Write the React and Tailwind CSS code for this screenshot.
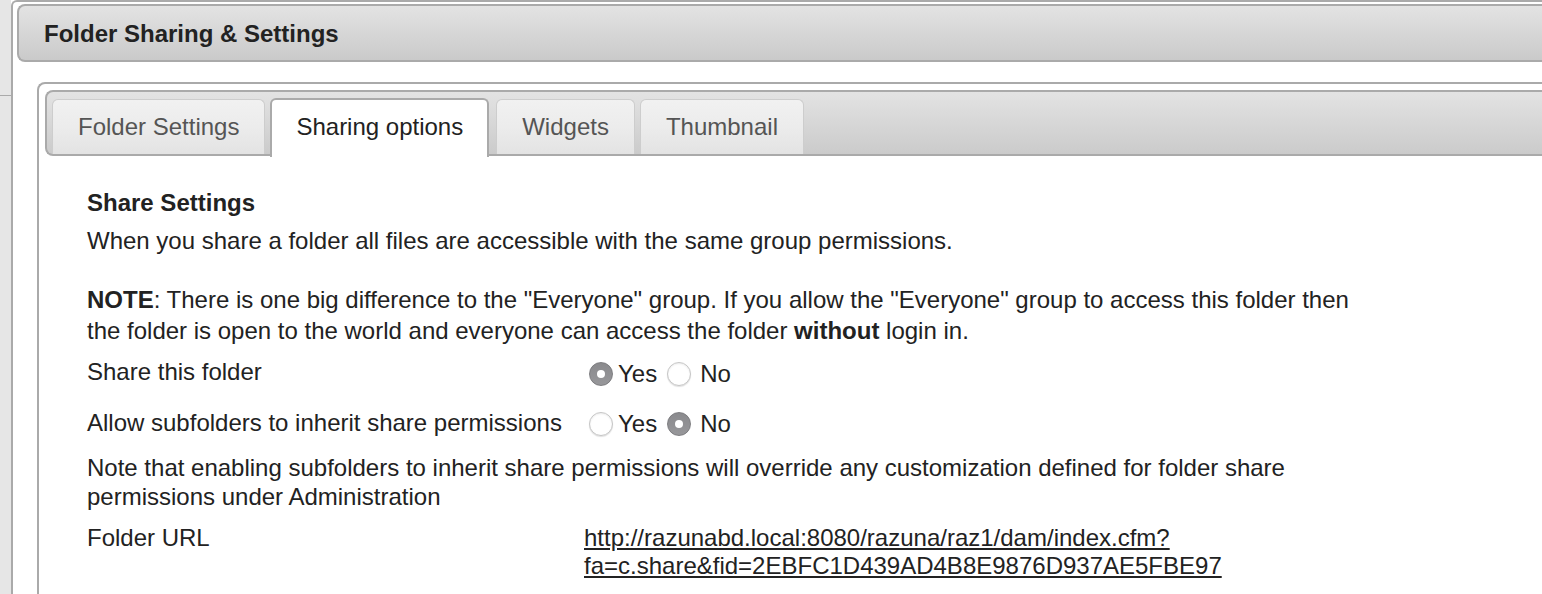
import React from "react";

const Radio = ({ checked }) =>
  checked ? (
    <span className="ml-[5px] mr-[5px] inline-flex h-[24px] w-[24px] shrink-0 items-center justify-center rounded-full border border-[#7d7d80] bg-linear-to-b from-[#8a8a8d] to-[#97979a]">
      <span className="h-[8px] w-[8px] rounded-full bg-white" />
    </span>
  ) : (
    <span className="ml-[5px] mr-[5px] inline-block h-[24px] w-[24px] shrink-0 rounded-full border border-[#c6c6c6] bg-white shadow-[inset_0_1px_2px_rgba(0,0,0,0.08),0_1px_1px_rgba(0,0,0,0.12)]" />
  );

const tabs = [
  { label: "Folder Settings" },
  { label: "Sharing options", active: true },
  { label: "Widgets" },
  { label: "Thumbnail" },
];

const App = () => {
  return (
    <div className="flex h-[594px] w-full overflow-hidden bg-white text-[24px] text-[#222] font-['Liberation_Sans',Arial,sans-serif]">
      {/* left strip */}
      <div className="w-[11px] shrink-0 bg-[#e6e6e6]">
        <div className="h-[96px] border-b border-[#aaa]" />
      </div>

      <div className="min-w-0 flex-1 rounded-tl-[6px] border-l-2 border-t-2 border-[#aaa] pl-[4px] pt-[2px]">
        {/* header */}
        <div className="-mr-6 flex h-[58px] items-center rounded-l-lg border-2 border-r-0 border-[#aaa] bg-linear-to-b from-[#e3e3e3] to-[#cacaca] pl-[25px] pt-[1px] font-bold">
          Folder Sharing &amp; Settings
        </div>

        {/* tab container */}
        <div className="-mr-6 ml-[20px] mt-[20px] h-[600px] rounded-tl-lg border-l-2 border-t-2 border-[#aaa] pl-[6px] pt-[6px]">
          <div className="flex h-[66px] items-end rounded-l-lg border-2 border-r-0 border-[#aaa] bg-linear-to-b from-[#e3e3e3] to-[#cbcbcb] pl-[5px]">
            {tabs.map((t, i) =>
              t.active ? (
                <div
                  key={i}
                  className="relative z-10 -mb-[3px] mr-[7px] flex h-[59px] items-center rounded-t-md border-2 border-b-0 border-[#aaa] bg-white px-[24px] pb-[3px] text-[#222]"
                >
                  {t.label}
                </div>
              ) : (
                <div
                  key={i}
                  className="mr-[5px] flex h-[55px] items-center rounded-t-md border border-b-0 border-[#cdcdcd] bg-linear-to-b from-[#f1f1f1] via-[#ececec] to-[#e3e3e3] px-[25px] text-[#555]"
                >
                  {t.label}
                </div>
              )
            )}
          </div>

          {/* content */}
          <div className="max-w-[1322px] pl-[42px] pt-[32px]">
            <div className="h-[30px] font-bold leading-[30px]">Share Settings</div>
            <p className="mt-[8px] leading-[30px]">
              When you share a folder all files are accessible with the same group permissions.
            </p>
            <p className="mt-[28px] leading-[31px]">
              <b>NOTE</b>: There is one big difference to the "Everyone" group. If you allow the
              "Everyone" group to access this folder then the folder is open to the world and
              everyone can access the folder <b>without</b> login in.
            </p>

            <div className="mt-[13px] flex h-[30px] items-center">
              <div className="w-[497px] shrink-0 -translate-y-[2px]">Share this folder</div>
              <div className="flex items-center">
                <Radio checked />
                <span>Yes</span>
                <span className="w-[5px]" />
                <Radio />
                <span className="ml-[4px]">No</span>
              </div>
            </div>

            <div className="mt-[20px] flex h-[30px] items-center">
              <div className="w-[497px] shrink-0 -translate-y-[1px]">
                Allow subfolders to inherit share permissions
              </div>
              <div className="flex items-center">
                <Radio />
                <span>Yes</span>
                <span className="w-[5px]" />
                <Radio checked />
                <span className="ml-[4px]">No</span>
              </div>
            </div>

            <p className="mt-[14px] leading-[29px]">
              Note that enabling subfolders to inherit share permissions will override any
              customization defined for folder share permissions under Administration
            </p>

            <div className="mt-[13px] flex leading-[28px]">
              <div className="w-[497px] shrink-0">Folder URL</div>
              <a href="#" className="text-[#222] underline">
                http://razunabd.local:8080/razuna/raz1/dam/index.cfm?
                <br />
                fa=c.share&amp;fid=2EBFC1D439AD4B8E9876D937AE5FBE97
              </a>
            </div>
          </div>
        </div>
      </div>
    </div>
  );
};

export default App;
